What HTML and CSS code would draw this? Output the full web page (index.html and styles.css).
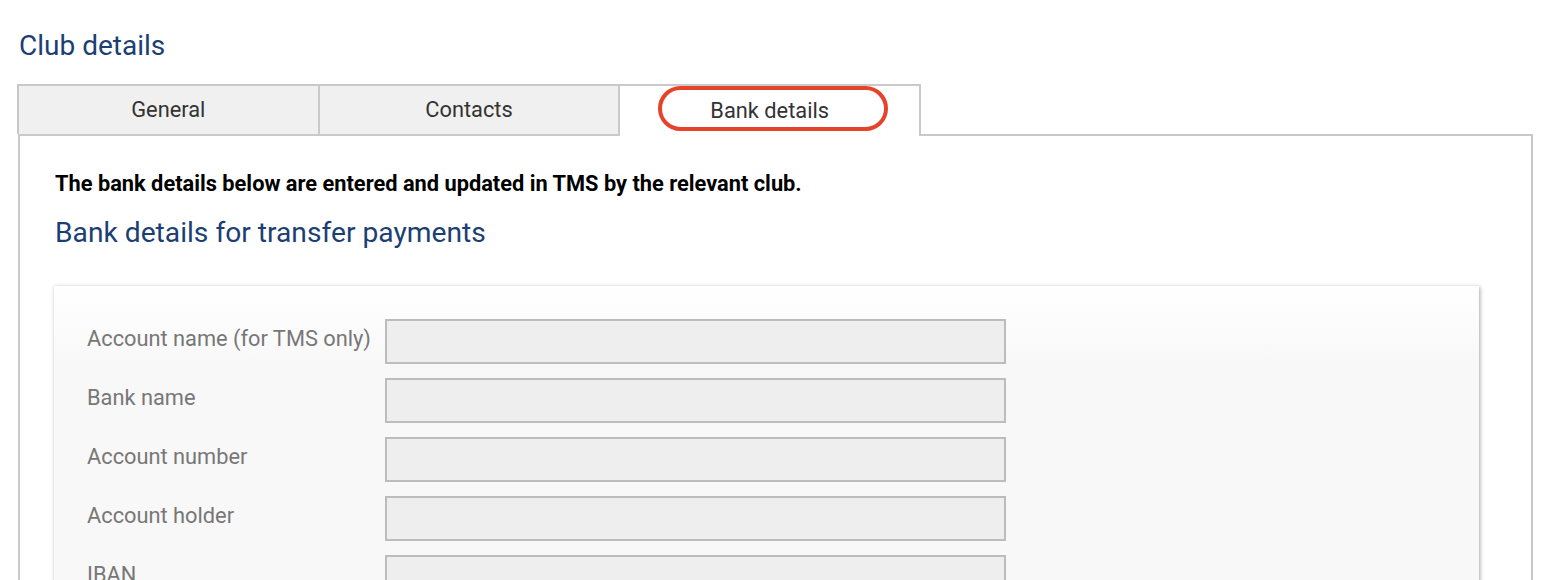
FILE: index.html
```html
<!DOCTYPE html>
<html>
<head>
<meta charset="utf-8">
<link rel="stylesheet" href="styles.css">
</head>
<body>
<h1 class="page-title">Club details</h1>
<div class="tabs">
  <div class="tab">General</div>
  <div class="tab">Contacts</div>
  <div class="tab tab-active">Bank details<span class="highlight"></span></div>
</div>
<div class="panel">
  <p class="notice">The bank details below are entered and updated in TMS by the relevant club.</p>
  <h2 class="section-title">Bank details for transfer payments</h2>
  <div class="card">
    <div class="row"><label class="label">Account name (for TMS only)</label><div class="input"></div></div>
    <div class="row"><label class="label">Bank name</label><div class="input"></div></div>
    <div class="row"><label class="label">Account number</label><div class="input"></div></div>
    <div class="row"><label class="label">Account holder</label><div class="input"></div></div>
    <div class="row"><label class="label">IBAN</label><div class="input"></div></div>
    <div class="row"><label class="label">BIC</label><div class="input"></div></div>
  </div>
</div>
</body>
</html>
```
FILE: styles.css
```css
html, body {
  margin: 0;
  padding: 0;
  background: #fff;
  font-family: Roboto, "Liberation Sans", Arial, sans-serif;
}
body {
  padding: 0 17px;
  overflow: hidden;
  height: 580px;
}
.page-title {
  margin: 0;
  padding-top: 30px;
  font-size: 28px;
  font-weight: 400;
  line-height: 32px;
  color: #1b3f73;
  padding-left: 2px;
}
.tabs {
  display: flex;
  width: 904px;
  margin-top: 22px;
  position: relative;
  z-index: 2;
}
.tab {
  flex: 1;
  height: 46px;
  padding-bottom: 2px;
  border-top: 2px solid #c9c9c9;
  border-left: 2px solid #c9c9c9;
  background: #f0f0f0;
  color: #333;
  font-size: 21.8px;
  display: flex;
  align-items: center;
  justify-content: center;
  position: relative;
}
.tab-active {
  background: #fff;
  border-right: 2px solid #c9c9c9;
  height: 48px;
  margin-bottom: -2px;
}
.highlight {
  position: absolute;
  left: 38px;
  top: 0;
  width: 222px;
  height: 37px;
  border: 4px solid #e6432b;
  border-radius: 25px;
}
.panel {
  border: 2px solid #c9c9c9;
  border-bottom: none;
  margin-left: 1px;
  margin-right: -2px;
  padding: 35px 52px 0 35px;
  height: 500px;
}
.notice {
  margin: 0;
  font-size: 21.8px;
  font-weight: 700;
  color: #000;
  line-height: 26px;
}
.section-title {
  margin: 18px 0 0;
  font-size: 28.2px;
  font-weight: 400;
  color: #1b3f73;
  line-height: 36px;
}
.card {
  margin-top: 35px;
  margin-left: -1px;
  padding: 33px 33px 20px;
  background: linear-gradient(#ffffff 0px, #f8f8f8 80px, #f8f8f8 100%);
  box-shadow: 1px 1px 4px rgba(0, 0, 0, 0.35);
  display: flex;
  flex-direction: column;
  gap: 14px;
}
.row {
  display: flex;
  align-items: center;
}
.label {
  width: 298px;
  font-size: 21.8px;
  color: #777;
  margin-top: -6px;
}
.input {
  width: 617px;
  height: 41px;
  border: 2px solid #bcbcbc;
  background: #eeeeee;
}
```
